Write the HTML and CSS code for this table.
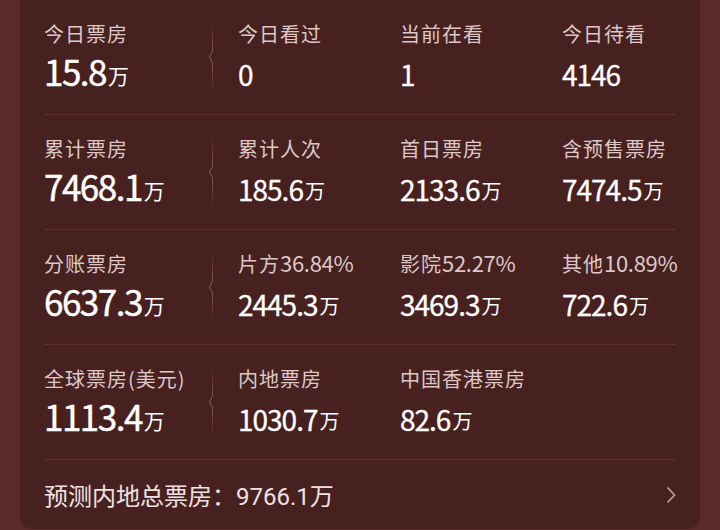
FILE: index.html
```html
<!DOCTYPE html>
<html lang="zh-CN">
<head>
<meta charset="utf-8">
<title>票房数据</title>
<link rel="stylesheet" href="styles.css">
</head>
<body>
<div class="card">
  <div class="row">
    <div class="cell first"><div class="label">今日票房</div><div class="value big">15.8<span class="unit">万</span></div></div>
    <svg class="divider" width="6" height="70" viewBox="0 0 6 70"><defs><linearGradient id="dg" gradientUnits="userSpaceOnUse" x1="0" y1="0" x2="0" y2="70"><stop offset="0" stop-color="#8a5a58" stop-opacity="0"/><stop offset="0.5" stop-color="#8e5e5c"/><stop offset="1" stop-color="#8a5a58" stop-opacity="0"/></linearGradient></defs><path d="M4.5 0 V29 L1.5 35 L4.5 41 V70" fill="none" stroke="url(#dg)" stroke-width="1"/></svg>
    <div class="cell"><div class="label">今日看过</div><div class="value">0</div></div>
    <div class="cell"><div class="label">当前在看</div><div class="value">1</div></div>
    <div class="cell last"><div class="label">今日待看</div><div class="value">4146</div></div>
  </div>
  <div class="row">
    <div class="cell first"><div class="label">累计票房</div><div class="value big">7468.1<span class="unit">万</span></div></div>
    <svg class="divider" width="6" height="70" viewBox="0 0 6 70"><path d="M4.5 0 V29 L1.5 35 L4.5 41 V70" fill="none" stroke="url(#dg)" stroke-width="1"/></svg>
    <div class="cell"><div class="label">累计人次</div><div class="value">185.6<span class="unit">万</span></div></div>
    <div class="cell"><div class="label">首日票房</div><div class="value">2133.6<span class="unit">万</span></div></div>
    <div class="cell last"><div class="label">含预售票房</div><div class="value">7474.5<span class="unit">万</span></div></div>
  </div>
  <div class="row">
    <div class="cell first"><div class="label">分账票房</div><div class="value big">6637.3<span class="unit">万</span></div></div>
    <svg class="divider" width="6" height="70" viewBox="0 0 6 70"><path d="M4.5 0 V29 L1.5 35 L4.5 41 V70" fill="none" stroke="url(#dg)" stroke-width="1"/></svg>
    <div class="cell"><div class="label">片方<span class="num">36.84%</span></div><div class="value">2445.3<span class="unit">万</span></div></div>
    <div class="cell"><div class="label">影院<span class="num">52.27%</span></div><div class="value">3469.3<span class="unit">万</span></div></div>
    <div class="cell last"><div class="label">其他<span class="num">10.89%</span></div><div class="value">722.6<span class="unit">万</span></div></div>
  </div>
  <div class="row">
    <div class="cell first"><div class="label">全球票房(美元)</div><div class="value big">1113.4<span class="unit">万</span></div></div>
    <svg class="divider" width="6" height="70" viewBox="0 0 6 70"><path d="M4.5 0 V29 L1.5 35 L4.5 41 V70" fill="none" stroke="url(#dg)" stroke-width="1"/></svg>
    <div class="cell"><div class="label">内地票房</div><div class="value">1030.7<span class="unit">万</span></div></div>
    <div class="cell"><div class="label">中国香港票房</div><div class="value">82.6<span class="unit">万</span></div></div>
    <div class="cell last"></div>
  </div>
  <div class="forecast">
    <span class="forecast-text">预测内地总票房：9766.1万</span>
    <svg class="chevron" width="10" height="18" viewBox="0 0 10 18"><path d="M1.5 1.5 L8.5 9 L1.5 16.5" fill="none" stroke="#b79c9b" stroke-width="1.8"/></svg>
  </div>
</div>
</body>
</html>
```
FILE: styles.css
```css
html, body {
  margin: 0;
  padding: 0;
}
body {
  width: 720px;
  height: 530px;
  overflow: hidden;
  background: #5a2929;
  font-family: "Noto Sans CJK SC", sans-serif;
}
.card {
  margin: 0 20px;
  height: 529px;
  padding: 0 24px;
  box-sizing: border-box;
  background: #472120;
  border-radius: 0 0 12px 12px;
}
.row {
  display: flex;
  height: 114px;
  border-bottom: 1px solid #5a302e;
}
.cell {
  width: 162px;
  flex: none;
  padding-top: 20px;
  box-sizing: border-box;
  white-space: nowrap;
}
.cell.first {
  width: 164px;
}
.cell.last {
  flex: 1;
  width: auto;
}
.divider {
  flex: none;
  align-self: center;
  margin-right: 24px;
}
.label {
  font-size: 20px;
  line-height: 28px;
  letter-spacing: 1px;
  color: #dcc8c7;
}
.num {
  font-size: 22px;
  line-height: 1;
  letter-spacing: -0.3px;
}
.value {
  margin-top: 6px;
  font-size: 28px;
  line-height: 40px;
  font-weight: 400;
  letter-spacing: -1px;
  color: #ffffff;
  -webkit-text-stroke: 0.3px #ffffff;
}
.value.big {
  margin-top: 4px;
  font-size: 35px;
  line-height: 38px;
  letter-spacing: -1.5px;
  -webkit-text-stroke: 0.45px #ffffff;
}
.unit {
  font-size: 20px;
  line-height: 1;
  letter-spacing: 0;
  margin-left: 2px;
  vertical-align: 2px;
  font-weight: 400;
  -webkit-text-stroke: 0;
}
.value.big .unit {
  font-size: 21px;
  -webkit-text-stroke: 0;
}
.forecast {
  display: flex;
  align-items: center;
  justify-content: space-between;
  height: 69px;
}
.forecast-text {
  font-family: Roboto, "Noto Sans CJK SC", sans-serif;
  font-size: 24px;
  color: #efe2e1;
}
.chevron {
  display: block;
}
```
